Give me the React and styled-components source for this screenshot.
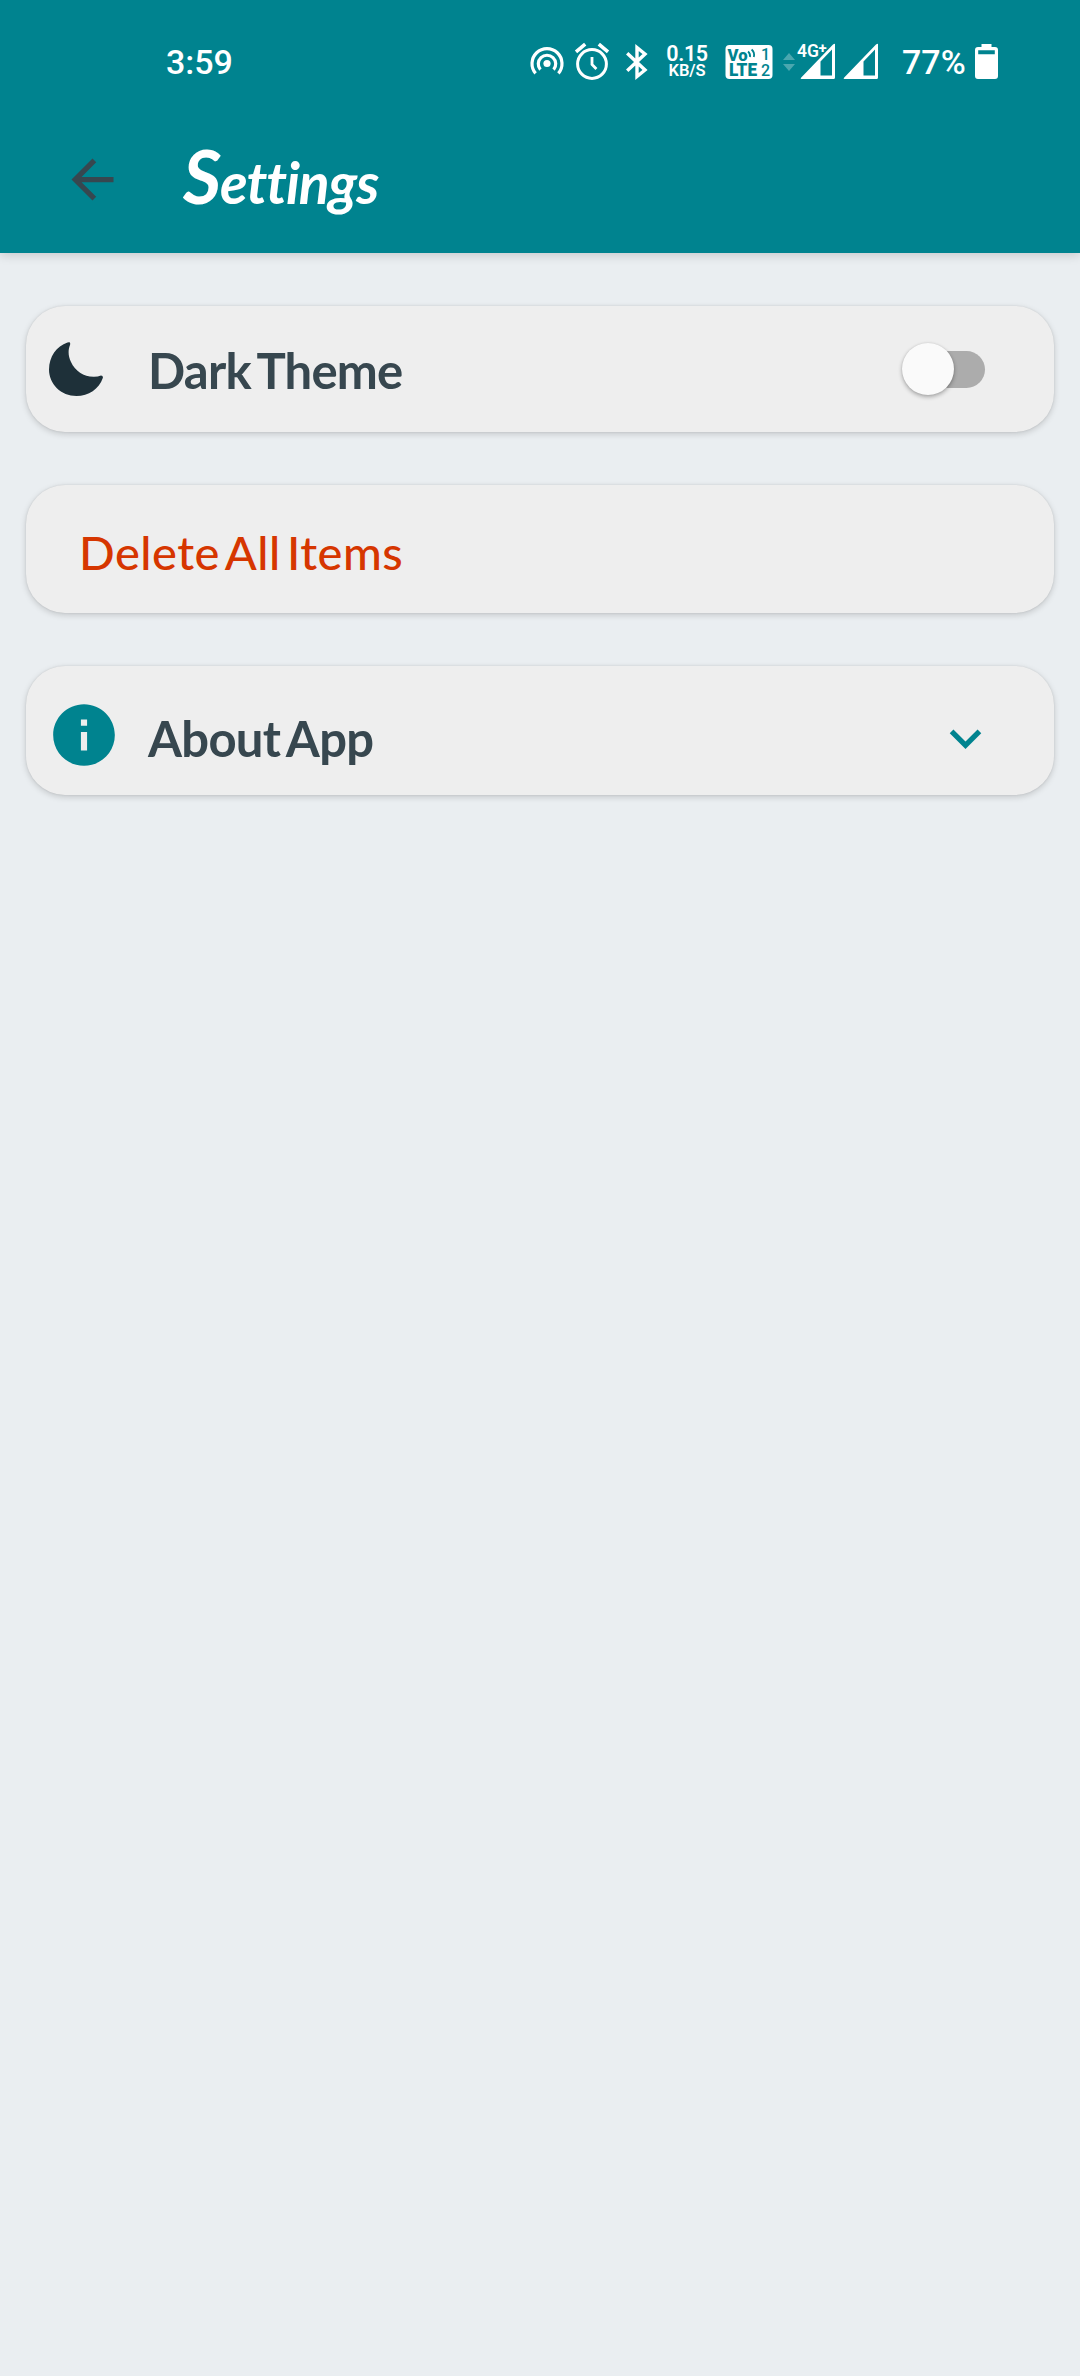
import React from "react";
import styled, { createGlobalStyle } from "styled-components";

const teal = "#00838f";
const slate = "#37474f";

const Global = createGlobalStyle`
  * { box-sizing: border-box; }
  body { margin: 0; background: #eaeef1; }
`;

const Screen = styled.div`
  display: flex;
  flex-direction: column;
  width: 1080px;
  height: 2376px;
  background: #eaeef1;
  overflow: hidden;
`;

const Header = styled.header`
  flex: none;
  height: 253px;
  background: ${teal};
  box-shadow: 0 2px 10px rgba(0, 0, 0, 0.16);
`;

const StatusBar = styled.div`
  display: flex;
  align-items: center;
  height: 123px;
  padding-left: 166px;
  color: #fff;
  font-family: Roboto, sans-serif;
  font-weight: 500;
  white-space: nowrap;
`;

const StatusText = styled.span`
  flex: none;
  width: ${(p) => p.$w}px;
  margin-left: ${(p) => p.$gap || 0}px;
  font-size: 34px;
  line-height: 40px;
`;

const Icons = styled.div`
  display: flex;
  align-items: center;
  margin-left: 298px;
`;

const StatusIcon = styled.svg`
  flex: none;
  display: block;
  margin-left: ${(p) => p.$gap || 0}px;
  overflow: visible;
  font-family: Roboto, sans-serif;
`;

const Speed = styled.div`
  display: flex;
  flex-direction: column;
  align-items: center;
  flex: none;
  width: 42px;
  margin-left: 18px;
`;

const SpeedLine = styled.span`
  font-size: ${(p) => p.$size}px;
  font-weight: 600;
  line-height: ${(p) => p.$lh}px;
  letter-spacing: ${(p) => p.$ls}px;
`;

const Toolbar = styled.div`
  display: flex;
  align-items: center;
  height: 112px;
  padding-left: 61px;
`;

const Title = styled.h1`
  margin: 0 0 0 59px;
  color: #fff;
  font-family: Lato, sans-serif;
  font-style: italic;
  font-weight: 700;
  font-size: 57px;
  line-height: 80px;
  letter-spacing: -1.1px;
  &::first-letter { font-size: 74px; }
`;

const List = styled.main`
  display: flex;
  flex-direction: column;
  gap: 53px;
  padding: 53px 26px 0;
`;

const Card = styled.section`
  display: flex;
  align-items: center;
  height: ${(p) => p.$h}px;
  padding: 0 ${(p) => p.$right || 0}px 0 ${(p) => p.$left}px;
  border-radius: 39px;
  background: #eee;
  box-shadow: 0 2px 6px rgba(0, 0, 0, 0.17), 0 0 2px rgba(0, 0, 0, 0.1);
`;

const Label = styled.span`
  flex: 1;
  margin-left: ${(p) => p.$gap || 0}px;
  padding-top: ${(p) => p.$drop || 0}px;
  color: ${(p) => (p.$danger ? "#d63600" : slate)};
  font-family: Lato, sans-serif;
  font-weight: ${(p) => (p.$danger ? 500 : 700)};
  font-size: ${(p) => p.$size}px;
  line-height: 60px;
  letter-spacing: ${(p) => p.$ls}px;
  word-spacing: ${(p) => p.$ws}px;
  white-space: nowrap;
`;

const Glyph = styled.svg`
  flex: none;
  display: block;
  margin-top: ${(p) => p.$drop || 0}px;
`;

const Track = styled.button`
  display: flex;
  align-items: center;
  flex: none;
  width: 76px;
  height: 37px;
  padding: 0;
  border: 0;
  border-radius: 19px;
  background: #acacac;
`;

const Thumb = styled.span`
  flex: none;
  width: 52px;
  height: 52px;
  margin-left: -7px;
  border-radius: 50%;
  background: #fafafa;
  box-shadow: 0 2px 4px rgba(0, 0, 0, 0.3), 0 0 2px rgba(0, 0, 0, 0.1);
`;

const Signal = () => (
  <path
    fillRule="evenodd"
    d="M35 0.5V33.5Q35 35 33.5 35H1.5Q0 35 1 33.8L33 0.6Q35 -1 35 0.5ZM32 5.5V31.5H20.5V17.5Z"
  />
);

function StatusIcons() {
  return (
    <Icons>
      <StatusIcon width="34" height="36" viewBox="0 0 34 36" fill="none" stroke="#fff" strokeWidth="3.2">
        <circle cx="17" cy="19.5" r="3.6" fill="#fff" stroke="none" />
        <path d="M10.4 25.6A8.7 8.7 0 1 1 23.6 25.6" />
        <path d="M5.6 29.4A15 15 0 1 1 28.4 29.4" />
      </StatusIcon>
      <StatusIcon $gap={11} width="34" height="37" viewBox="0 0 34 37" fill="none" stroke="#fff" strokeWidth="3">
        <circle cx="17" cy="21" r="14.4" />
        <path d="M17 14V21.5L21.4 26" strokeWidth="2.8" />
        <path d="M1 8.8L10.2 1.2M33 8.8L23.8 1.2" strokeWidth="3.6" />
      </StatusIcon>
      <StatusIcon $gap={17} width="22" height="34" viewBox="0 0 22 34" fill="none" stroke="#fff" strokeWidth="3.4">
        <path d="M1.2 8.2L19 25L11 31.5V2.5L19 9L1.2 25.8" />
      </StatusIcon>
      <Speed>
        <SpeedLine $size={21.5} $lh={18} $ls={-0.4}>0.15</SpeedLine>
        <SpeedLine $size={16.5} $lh={16} $ls={-0.1}>KB/S</SpeedLine>
      </Speed>
      <StatusIcon $gap={17} width="48" height="34" viewBox="0 0 48 34">
        <rect x="0.5" y="0" width="47" height="34" rx="4" fill="#fff" />
        <g fill={teal}>
          <text x="2.5" y="15.5" fontSize="17" fontWeight="900" textLength="20" lengthAdjust="spacingAndGlyphs">Vo</text>
          <text x="4" y="31" fontSize="18" fontWeight="900" textLength="28" lengthAdjust="spacingAndGlyphs">LTE</text>
          <text x="36" y="15" fontSize="16" fontWeight="500">1</text>
          <text x="36" y="31" fontSize="16" fontWeight="500">2</text>
        </g>
        <path d="M23 6.5Q25.5 8.5 25 12M26.6 4.5Q30 7.5 28.8 12" fill="none" stroke={teal} strokeWidth="1.8" />
      </StatusIcon>
      <StatusIcon $gap={10} width="12" height="18" viewBox="0 0 12 18" fill="#4aa7af">
        <path d="M0 7L6 0L12 7ZM0 11H12L6 18Z" />
      </StatusIcon>
      <StatusIcon $gap={5} width="35" height="35" viewBox="0 0 35 35" fill="#fff">
        <Signal />
        <text x="-3" y="13" fontSize="18" fontWeight="600" textLength="22" lengthAdjust="spacingAndGlyphs" stroke={teal} strokeWidth="2" paintOrder="stroke">4G</text>
        <text x="18.5" y="9" fontSize="15" fontWeight="700" stroke={teal} strokeWidth="1.5" paintOrder="stroke">+</text>
      </StatusIcon>
      <StatusIcon $gap={8} width="35" height="35" viewBox="0 0 35 35" fill="#fff">
        <Signal />
      </StatusIcon>
    </Icons>
  );
}

export default function App() {
  return (
    <>
      <Global />
      <Screen>
        <Header>
          <StatusBar>
            <StatusText $w={66}>3:59</StatusText>
            <StatusIcons />
            <StatusText $w={73} $gap={24}>77%</StatusText>
            <StatusIcon width="23" height="35" viewBox="0 0 23 35" fill="#fff">
              <path
                fillRule="evenodd"
                d="M6.5 0H16.5V3H20Q23 3 23 6V32Q23 35 20 35H3Q0 35 0 32V6Q0 3 3 3H6.5ZM3.2 6.3V10.3H19.8V6.3Z"
              />
            </StatusIcon>
          </StatusBar>
          <Toolbar>
            <Glyph width="63" height="63" viewBox="0 0 24 24" fill={slate}>
              <path d="M20 11H7.83l5.59-5.59L12 4l-8 8 8 8 1.41-1.41L7.83 13H20v-2z" />
            </Glyph>
            <Title>Settings</Title>
          </Toolbar>
        </Header>
        <List>
          <Card $h={126} $left={23} $right={69}>
            <Glyph width="54" height="54" viewBox="0 0 54 54" fill="#1e3039">
              <path d="M20.5 0.2Q21.6 0.8 21 3C19 8 19 14 22 20C26 29 35 35 45 34.8Q49 34.6 52 33.4Q54.4 33.6 53.8 36C50 47 39.5 54 27.5 54C12 54 0 42 0 27.5C0 14.5 7.5 4 18.5 0.4Q19.7 0 20.5 0.2Z" />
            </Glyph>
            <Label $gap={45} $drop={2} $size={49} $ls={-0.8} $ws={-4}>Dark Theme</Label>
            <Track aria-label="Dark Theme"><Thumb /></Track>
          </Card>
          <Card $h={128} $left={52}>
            <Label $danger $gap={1} $drop={5} $size={47} $ls={0.5} $ws={-6}>Delete All Items</Label>
          </Card>
          <Card $h={129} $left={21} $right={57}>
            <Glyph $drop={9} width="74" height="74" viewBox="0 0 24 24" fill={teal}>
              <path d="M12 2C6.48 2 2 6.48 2 12s4.48 10 10 10 10-4.48 10-10S17.52 2 12 2zm1 15h-2v-6h2v6zm0-8h-2V7h2v2z" />
            </Glyph>
            <Label $gap={27} $drop={14} $size={49} $ls={-0.7} $ws={-4}>About App</Label>
            <Glyph $drop={16} width="63" height="63" viewBox="0 0 24 24" fill={teal}>
              <path d="M16.59 8.59L12 13.17 7.41 8.59 6 10l6 6 6-6z" />
            </Glyph>
          </Card>
        </List>
      </Screen>
    </>
  );
}
